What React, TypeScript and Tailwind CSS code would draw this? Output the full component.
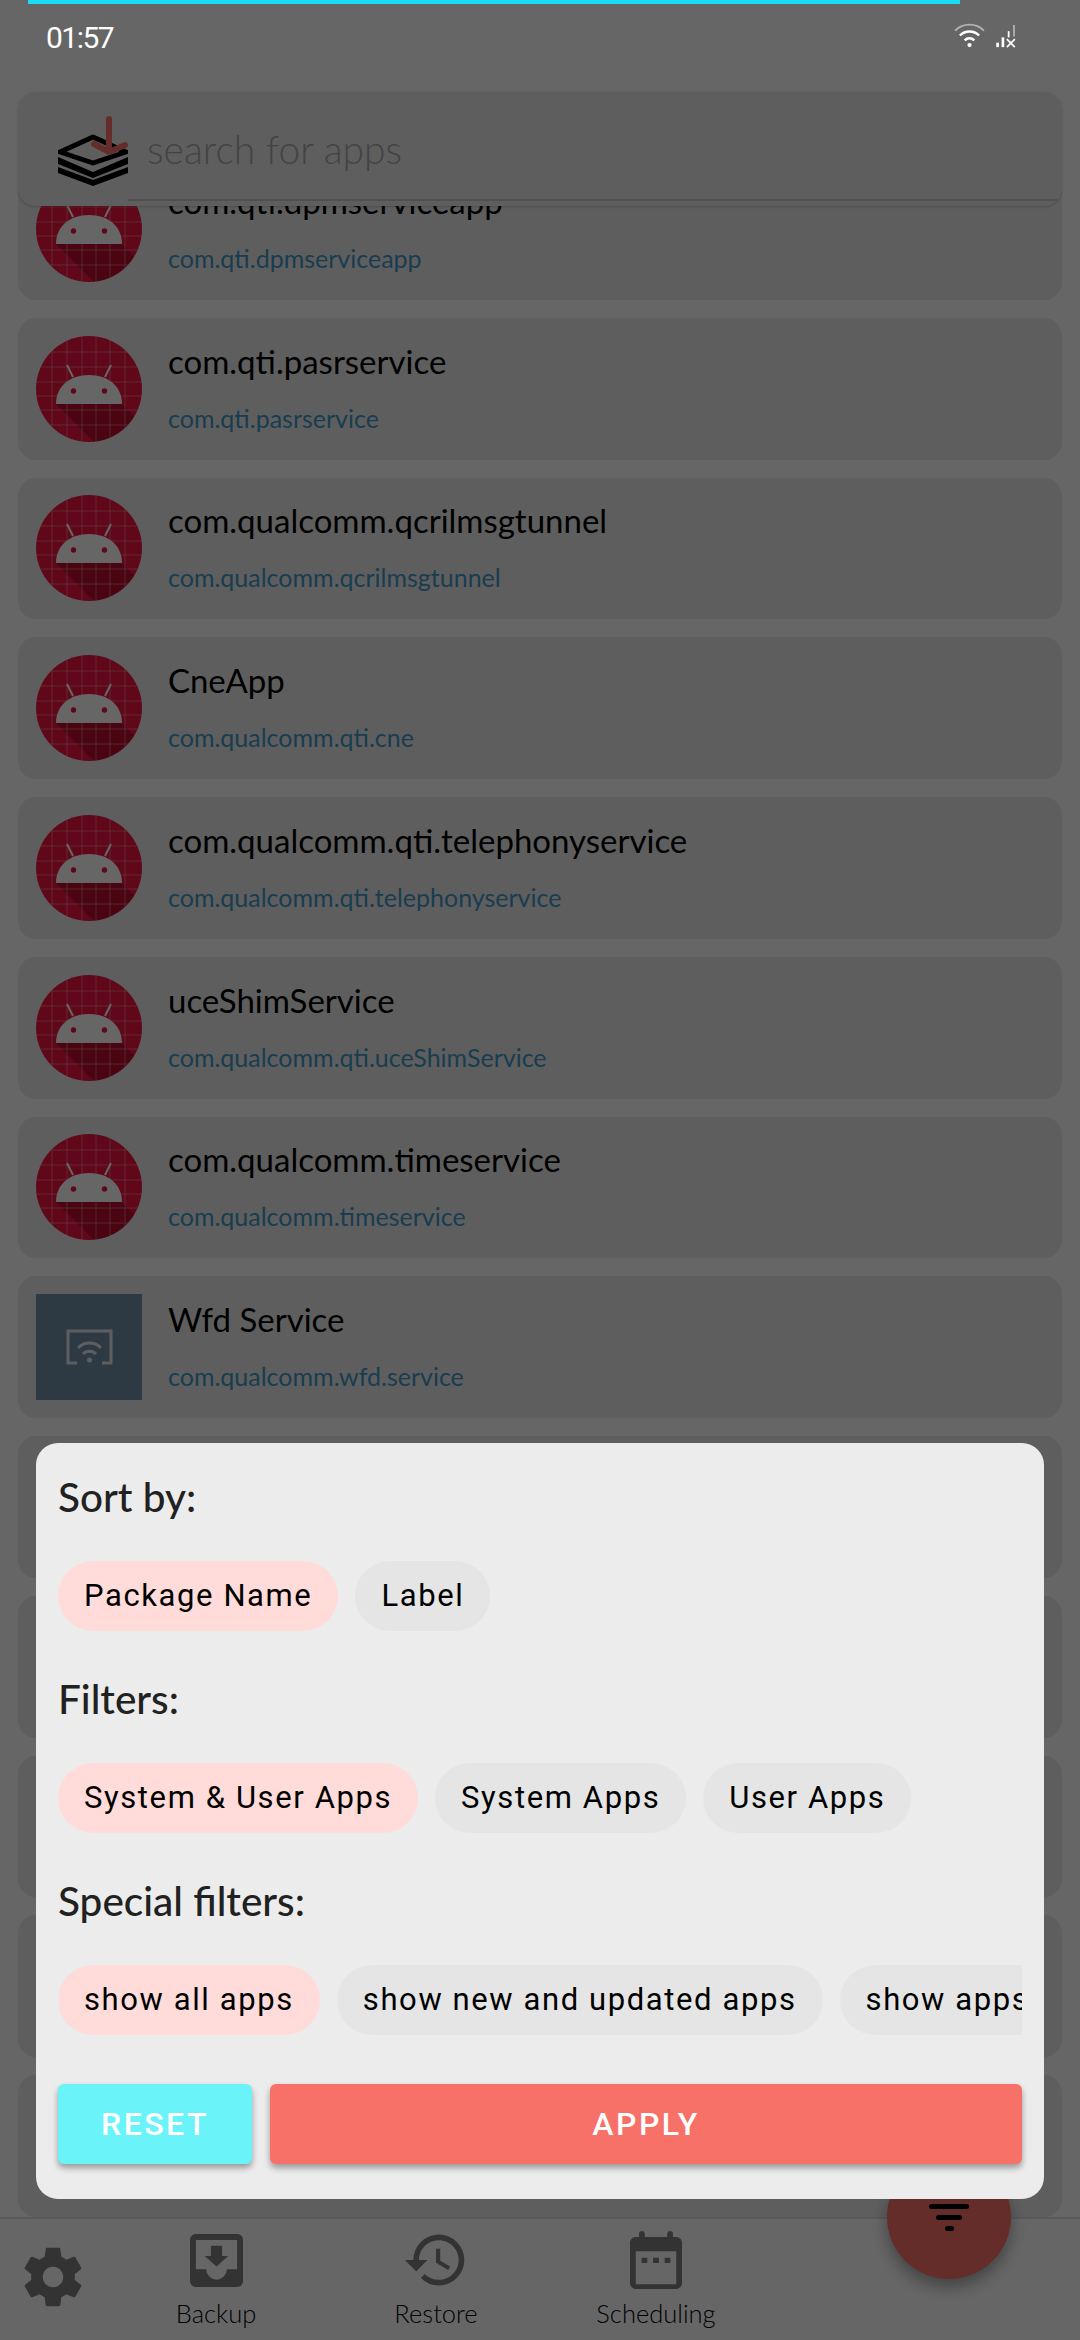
import type { ReactNode } from 'react';

const apps = [
  { name: 'com.qti.dpmserviceapp', pkg: 'com.qti.dpmserviceapp' },
  { name: 'com.qti.pasrservice', pkg: 'com.qti.pasrservice' },
  { name: 'com.qualcomm.qcrilmsgtunnel', pkg: 'com.qualcomm.qcrilmsgtunnel' },
  { name: 'CneApp', pkg: 'com.qualcomm.qti.cne' },
  { name: 'com.qualcomm.qti.telephonyservice', pkg: 'com.qualcomm.qti.telephonyservice' },
  { name: 'uceShimService', pkg: 'com.qualcomm.qti.uceShimService' },
  { name: 'com.qualcomm.timeservice', pkg: 'com.qualcomm.timeservice' },
  { name: 'Wfd Service', pkg: 'com.qualcomm.wfd.service', wfd: true },
  { name: '', pkg: '' },
  { name: '', pkg: '' },
  { name: '', pkg: '' },
  { name: '', pkg: '' },
  { name: '', pkg: '' },
];

function AndroidIcon() {
  const grid = [16, 31, 46, 60, 74, 89];
  return (
    <svg viewBox="0 0 106 106" className="w-[106px] h-[106px] shrink-0">
      <defs>
        <clipPath id="round">
          <circle cx="53" cy="53" r="53" />
        </clipPath>
      </defs>
      <g clipPath="url(#round)">
        <rect width="106" height="106" fill="#f0163f" />
        <path d="M20 68 L86 68 L106 88 L106 106 L58 106 Z" fill="#000" opacity="0.22" />
        {grid.map((g) => (
          <g key={g} stroke="#fff" strokeWidth="0.9" opacity="0.38">
            <line x1={g} y1="0" x2={g} y2="106" />
            <line x1="0" y1={g} x2="106" y2={g} />
          </g>
        ))}
      </g>
      <path d="M20 68 C20 50 34 39 53 39 C72 39 86 50 86 68 Z" fill="#fff" />
      <path d="M37 41 L31 29 M69 41 L75 29" stroke="#fff" strokeWidth="2" />
      <circle cx="37.5" cy="55" r="2.7" fill="#f0163f" />
      <circle cx="68.5" cy="55" r="2.7" fill="#f0163f" />
    </svg>
  );
}

function WfdIcon() {
  return (
    <div className="w-[106px] h-[106px] shrink-0 bg-[#7090a8] flex items-center justify-center">
      <svg viewBox="0 0 47 36" className="w-[47px] h-[36px]" fill="none" stroke="#ececec" strokeWidth="3">
        <path d="M11 34 H2 V2 H45 V34 H36" />
        <path d="M12 19 a16 16 0 0 1 23 0 M17 25 a9 9 0 0 1 13 0" />
        <circle cx="23.5" cy="31" r="2.5" fill="#ececec" stroke="none" />
      </svg>
    </div>
  );
}

function AppRow({ app }: { app: (typeof apps)[number] }) {
  return (
    <div className="h-[142px] rounded-[18px] bg-[#ececec] flex items-center pl-[18px] gap-[26px]">
      {app.wfd ? <WfdIcon /> : <AndroidIcon />}
      <div className="flex flex-col gap-[22px] -mt-[4px]">
        <div className="text-[33px] leading-[40px] text-black">{app.name}</div>
        <div className="text-[25px] leading-[30px] text-[#3f98c8]">{app.pkg}</div>
      </div>
    </div>
  );
}

function Chip({ label, active }: { label: string; active?: boolean }) {
  return (
    <div
      className={`h-[70px] shrink-0 rounded-full px-[26px] flex items-center text-[31px] tracking-[1.6px] text-black font-['Roboto',sans-serif] ${
        active ? 'bg-[#ffdcd9]' : 'bg-[#e5e5e5]'
      }`}
    >
      {label}
    </div>
  );
}

function NavItem({ label, children }: { label: string; children: ReactNode }) {
  return (
    <div className="w-[140px] flex flex-col items-center">
      <div className="h-[58px] flex items-center justify-center">{children}</div>
      <div className="text-[25.5px] leading-[30px] mt-[9px] text-black font-light">{label}</div>
    </div>
  );
}

export default function App() {
  return (
    <div className="relative w-[1080px] h-[2340px] overflow-hidden bg-white font-['Lato',sans-serif]">
      {/* lista detras del scrim */}
      <div className="h-[2217px] overflow-hidden px-[18px] pt-[158px] flex flex-col gap-[18px]">
        {apps.map((app, i) => (
          <AppRow key={i} app={app} />
        ))}
      </div>

      {/* barra de busqueda */}
      <div className="absolute left-[18px] right-[18px] top-[92px] h-[114px] rounded-[18px] bg-[#ececec] shadow-[0_1px_3px_rgba(0,0,0,0.2)] flex items-center pl-[40px]">
        <svg viewBox="0 0 70 70" className="w-[70px] h-[70px] shrink-0 mt-[4px]">
          <path d="M35 21 L68 36 L35 47 L2 36 Z" fill="none" stroke="#000" strokeWidth="5" strokeLinejoin="round" />
          <path d="M0 41 L35 56 L70 41 V48 L35 62 L0 48 Z" fill="#000" />
          <path d="M0 51 L35 64 L70 51 V57 L35 70 L0 57 Z" fill="#000" />
          <path d="M51 3 V36 M36 28 L51 36 L67 29" fill="none" stroke="#f9716a" strokeWidth="6" strokeLinecap="round" />
        </svg>
        <div className="ml-[19px] text-[39px] font-light text-[#a8a8a8]">search for apps</div>
        <div className="absolute left-[110px] right-[4px] bottom-[5px] h-[2px] bg-[#c9c9c9]" />
      </div>

      {/* barra inferior */}
      <div className="absolute left-0 right-0 bottom-0 h-[123px] bg-white border-t-2 border-[#e0e0e0] flex items-start">
        <div className="w-[106px] flex justify-center pt-[23px]">
          <svg viewBox="0 0 24 24" className="w-[70px] h-[70px]" fill="#808080">
            <path d="M19.43 12.98c.04-.32.07-.64.07-.98s-.03-.66-.07-.98l2.11-1.65c.19-.15.24-.42.12-.64l-2-3.46c-.12-.22-.39-.3-.61-.22l-2.49 1c-.52-.4-1.08-.73-1.69-.98l-.38-2.65A.49.49 0 0 0 14 2h-4c-.25 0-.46.18-.49.42l-.38 2.65c-.61.25-1.17.59-1.69.98l-2.49-1c-.23-.09-.49 0-.61.22l-2 3.46c-.13.22-.07.49.12.64l2.11 1.65c-.04.32-.07.65-.07.98s.03.66.07.98l-2.11 1.65c-.19.15-.24.42-.12.64l2 3.46c.12.22.39.3.61.22l2.49-1c.52.4 1.08.73 1.69.98l.38 2.65c.03.24.24.42.49.42h4c.25 0 .46-.18.49-.42l.38-2.65c.61-.25 1.17-.59 1.69-.98l2.49 1c.23.09.49 0 .61-.22l2-3.46c.12-.22.07-.49-.12-.64l-2.11-1.65zM12 15.5c-1.93 0-3.5-1.57-3.5-3.5s1.57-3.5 3.5-3.5 3.5 1.57 3.5 3.5-1.57 3.5-3.5 3.5z" />
          </svg>
        </div>
        <div className="ml-[40px] pt-[12px]">
          <NavItem label="Backup">
            <svg viewBox="0 0 18 18" className="w-[53px] h-[53px]" fill="#808080">
              <path d="M16 0H2C.9 0 0 .9 0 2v14c0 1.1.9 2 2 2h14c1.1 0 2-.9 2-2V2c0-1.1-.9-2-2-2zm0 12h-3.5a3.5 3.5 0 0 1-7 0H2V2h14v10z" />
              <path d="M9 11l4-3.5h-2.1V4H7.1v3.5H5z" />
            </svg>
          </NavItem>
        </div>
        <div className="ml-[80px] pt-[12px]">
          <NavItem label="Restore">
            <svg viewBox="0 0 24 24" className="w-[68px] h-[68px]" fill="#808080">
              <path d="M13 3a9 9 0 0 0-9 9H1l3.89 3.89.07.14L9 12H6c0-3.87 3.13-7 7-7s7 3.13 7 7-3.13 7-7 7c-1.93 0-3.68-.79-4.94-2.06l-1.42 1.42A8.954 8.954 0 0 0 13 21a9 9 0 0 0 0-18zm-1 5v5l4.28 2.54.72-1.21-3.5-2.08V8H12z" />
            </svg>
          </NavItem>
        </div>
        <div className="ml-[80px] pt-[12px]">
          <NavItem label="Scheduling">
            <svg viewBox="0 0 18 20" className="w-[52px] h-[58px]" fill="#808080">
              <rect x="3.1" y="0" width="2" height="4" rx="1" />
              <rect x="12.9" y="0" width="2" height="4" rx="1" />
              <path d="M16 2H2C.9 2 0 2.9 0 4v14c0 1.1.9 2 2 2h14c1.1 0 2-.9 2-2V4c0-1.1-.9-2-2-2zm0 16.4H2V7h14v11.4z" />
              <path d="M4 9.2h2v1.8H4zM8 9.2h2v1.8H8zM12 9.2h2v1.8h-2z" />
            </svg>
          </NavItem>
        </div>
      </div>

      {/* boton filtro */}
      <div className="absolute left-[887px] top-[2155px] w-[124px] h-[124px] rounded-full bg-[#f9716a] shadow-[0_8px_16px_rgba(0,0,0,0.35)] flex flex-col items-center justify-center gap-[6px]">
        <div className="w-[40px] h-[5px] rounded-full bg-black" />
        <div className="w-[26px] h-[5px] rounded-full bg-black" />
        <div className="w-[9px] h-[5px] rounded-full bg-black" />
      </div>

      {/* scrim */}
      <div className="absolute inset-0 bg-black/60" />

      {/* status bar */}
      <div className="absolute left-[28px] top-0 w-[932px] h-[4px] bg-[#1adcf5]" />
      <div className="absolute left-[46px] top-[20px] text-[30px] leading-[36px] text-white tracking-[-1.5px] font-['Roboto',sans-serif]">01:57</div>
      <div className="absolute left-[954px] top-[23px] flex items-end gap-[11px]">
        <svg viewBox="0 0 32 26" className="w-[31px] h-[25px]" fill="none" stroke="#fff">
          <path d="M1 8a21 21 0 0 1 30 0" strokeWidth="2" opacity="0.5" />
          <path d="M6 13a14 14 0 0 1 20 0 M11 18a7 7 0 0 1 10 0" strokeWidth="2.5" />
          <circle cx="16" cy="23" r="2.2" fill="#fff" stroke="none" />
        </svg>
        <svg viewBox="0 0 22 26" className="w-[20px] h-[23px]" fill="#fff">
          <rect x="0" y="20" width="3" height="5" />
          <rect x="6" y="14" width="3" height="11" />
          <rect x="13" y="7" width="2" height="7" />
          <rect x="19" y="0" width="2" height="13" opacity="0.5" />
          <path d="M12 16 L21 25 M21 16 L12 25" stroke="#fff" strokeWidth="2" />
        </svg>
      </div>

      {/* dialogo de filtros */}
      <div className="absolute left-[36px] top-[1443px] w-[1008px] h-[756px] rounded-[22px] bg-[#ececec] px-[22px] pt-[30px]">
        <div className="text-[40.5px] leading-[48px] font-medium text-[#212121]">Sort by:</div>
        <div className="mt-[40px] flex gap-[17px]">
          <Chip label="Package Name" active />
          <Chip label="Label" />
        </div>
        <div className="mt-[44px] text-[40.5px] leading-[48px] font-medium text-[#212121]">Filters:</div>
        <div className="mt-[40px] flex gap-[17px]">
          <Chip label="System & User Apps" active />
          <Chip label="System Apps" />
          <Chip label="User Apps" />
        </div>
        <div className="mt-[44px] text-[40.5px] leading-[48px] font-medium text-[#212121]">Special filters:</div>
        <div className="mt-[40px] flex gap-[17px] overflow-hidden">
          <Chip label="show all apps" active />
          <Chip label="show new and updated apps" />
          <Chip label="show apps" />
        </div>
        <div className="mt-[49px] flex gap-[18px]">
          <div className="w-[194px] h-[80px] rounded-[6px] bg-[#6bf3fa] shadow-[0_4px_6px_rgba(0,0,0,0.35)] flex items-center justify-center text-white text-[32px] font-medium tracking-[2.5px] font-['Roboto',sans-serif]">RESET</div>
          <div className="flex-1 h-[80px] rounded-[6px] bg-[#f87168] shadow-[0_4px_6px_rgba(0,0,0,0.35)] flex items-center justify-center text-white text-[32px] font-medium tracking-[2.5px] font-['Roboto',sans-serif]">APPLY</div>
        </div>
      </div>
    </div>
  );
}
